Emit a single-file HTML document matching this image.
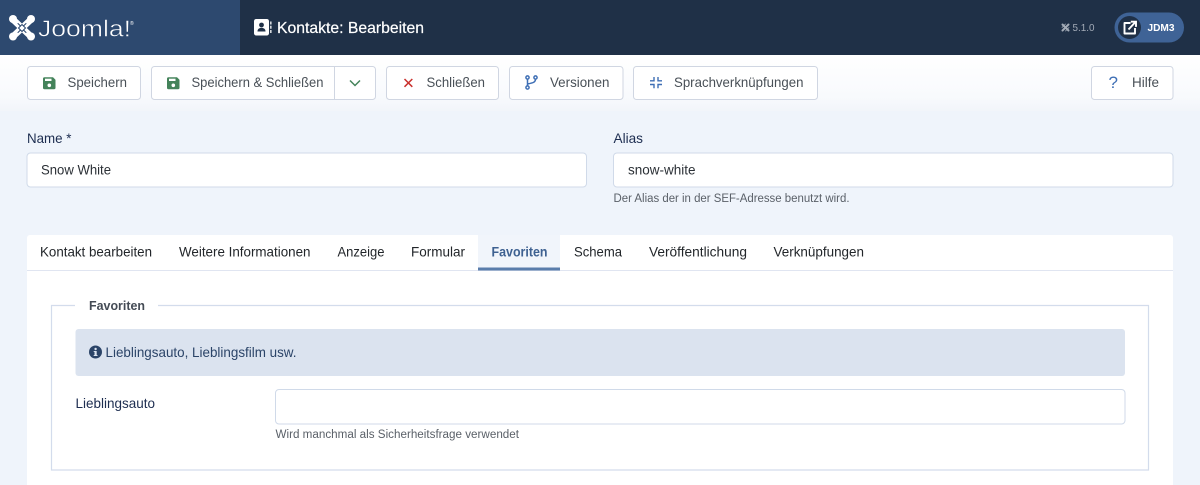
<!DOCTYPE html>
<html lang="de">
<head>
<meta charset="utf-8">
<title>Kontakte: Bearbeiten</title>
<style>
html,body{margin:0;padding:0;width:1200px;height:485px;overflow:hidden;background:#eff4fb}
svg{display:block}
text{font-family:"Liberation Sans",sans-serif;font-size:14px}
.btn{fill:#fff;stroke:#d0d6e2;stroke-width:1}
.bt{fill:#495057;font-size:14px}
.field{fill:#fff;stroke:#d0dae9;stroke-width:1}
.lab{fill:#1d2d50;font-size:14px}
.tab{fill:#22262a;font-size:14px}
.help{fill:#5a6068;font-size:11.5px}
</style>
</head>
<body>
<svg width="1200" height="485" viewBox="0 0 1200 485" xmlns="http://www.w3.org/2000/svg">
<defs>
<linearGradient id="tb" x1="0" y1="0" x2="0" y2="1">
<stop offset="0" stop-color="#ffffff"/><stop offset=".75" stop-color="#f8fafd"/><stop offset="1" stop-color="#f2f5fa"/>
</linearGradient>
</defs>
<rect width="1200" height="485" fill="#eff4fb"/>
<rect y="55" width="1200" height="56" fill="url(#tb)"/>
<rect width="1200" height="55" fill="#1f3047"/>
<rect width="240" height="55" fill="#2d496f"/>

<!-- logo -->
<g stroke-linecap="round" fill="none">
<path d="M13 19.500 31 36.500M31 19.500 13 36.500" stroke="#fff" stroke-width="6.500"/>
<path d="M18 23.500 20.500 26M26 23.500 23.500 26M18 32.500 20.500 30M26 32.500 23.500 30" stroke="#2d496f" stroke-width="1"/>
<path d="M22 24.500 18.500 28 22 31.500 25.500 28Z" stroke="#2d496f" stroke-width="1"/>
</g>
<g fill="#fff"><circle cx="13" cy="19" r="4"/><circle cx="31" cy="19" r="4"/><circle cx="13" cy="36.500" r="4"/><circle cx="31" cy="36.500" r="4"/></g>
<text x="38" y="36.500" textLength="93" lengthAdjust="spacingAndGlyphs" style="font-size:23px" fill="#fff" stroke="#2d496f" stroke-width=".5">Joomla!</text>
<text x="130" y="25" style="font-size:5px" fill="#fff">®</text>

<!-- title -->
<rect x="254" y="19" width="15" height="16.500" rx="2.200" fill="#fff"/>
<circle cx="261.500" cy="25" r="2.400" fill="#1f3047"/>
<path d="M257.500 31.500c0-2.600 1.600-3.600 4-3.600s4 1 4 3.600z" fill="#1f3047"/>
<path d="M270.200 21.500h1.300v3h-1.300zM270.200 25.800h1.300v3h-1.300zM270.200 30h1.300v3h-1.300z" fill="#fff"/>
<text x="277" y="33" textLength="147" lengthAdjust="spacingAndGlyphs" style="font-size:16px" fill="#fff" stroke="#fff" stroke-width=".2">Kontakte: Bearbeiten</text>

<!-- version -->
<g stroke="#a3abb7" fill="none" stroke-linecap="round">
<path d="M1062.500 24.500 1068.500 30.500M1068.500 24.500 1062.500 30.500" stroke-width="2"/>
<path d="M1062 27.500 1065.500 24M1069 27.500 1065.500 31" stroke-width=".8"/>
</g>
<text x="1072.500" y="31" textLength="22" lengthAdjust="spacingAndGlyphs" style="font-size:10.500px" fill="#a3abb7">5.1.0</text>

<!-- user pill -->
<rect x="1114.500" y="12.500" width="69.500" height="30" rx="15" fill="#3f6396"/>
<circle cx="1129.500" cy="27.500" r="11.500" fill="#1f3047"/>
<path d="M1130.500 23h-6v10.500h10.500v-5.500" fill="none" stroke="#fff" stroke-width="1.900" stroke-linejoin="round"/>
<path d="M1128.500 29.500 1135 22.500M1130.800 21.700h5.200v5.200" fill="none" stroke="#fff" stroke-width="1.900"/>
<text x="1147.500" y="31" textLength="27" lengthAdjust="spacingAndGlyphs" style="font-size:10.500px;font-weight:700" fill="#fff">JDM3</text>

<!-- toolbar -->
<rect class="btn" x="27.500" y="66.500" width="113" height="33" rx="3"/>
<rect class="btn" x="151.500" y="66.500" width="224" height="33" rx="3"/>
<path d="M334.500 67v32" stroke="#d0d6e2"/>
<rect class="btn" x="386.500" y="66.500" width="112" height="33" rx="3"/>
<rect class="btn" x="509.500" y="66.500" width="113.500" height="33" rx="3"/>
<rect class="btn" x="633.500" y="66.500" width="184" height="33" rx="3"/>
<rect class="btn" x="1091.500" y="66.500" width="81.500" height="33" rx="3"/>

<!-- save icons -->
<g id="sv">
<path d="M44.500 77.300h8.500l2.500 2.500v8a1.500 1.500 0 0 1-1.500 1.500h-9.500a1.500 1.500 0 0 1-1.500-1.500v-9a1.500 1.500 0 0 1 1.500-1.500z" fill="#44835a"/>
<rect x="45" y="78.700" width="6.500" height="2.300" fill="#fff"/>
<circle cx="49.300" cy="85.300" r="1.800" fill="#fff"/>
</g>
<use href="#sv" x="124"/>
<text class="bt" x="67.500" y="87" textLength="59.500" lengthAdjust="spacingAndGlyphs">Speichern</text>
<text class="bt" x="191.500" y="87" textLength="132" lengthAdjust="spacingAndGlyphs">Speichern &amp; Schließen</text>
<path d="M350 80.500 355 85.500 360 80.500" fill="none" stroke="#44835a" stroke-width="1.500"/>

<path d="M404.500 79 412.300 86.800M412.300 79 404.500 86.800" stroke="#c9302c" stroke-width="1.500"/>
<text class="bt" x="426.500" y="87" textLength="58.500" lengthAdjust="spacingAndGlyphs">Schließen</text>

<g fill="none" stroke="#3f6fb5" stroke-width="1.500">
<circle cx="527.500" cy="87.500" r="1.600"/><circle cx="527.500" cy="77.500" r="1.600"/><circle cx="535.500" cy="77.500" r="1.600"/>
<path d="M527.500 79v7M535.500 79c0 3.500-3 4-8 5"/>
</g>
<text class="bt" x="550" y="87" textLength="59.500" lengthAdjust="spacingAndGlyphs">Versionen</text>

<g fill="none" stroke="#3f6fb5" stroke-width="1.400">
<path d="M654 77v3.800h-4M658 77v3.800h4M654 88.300v-3.800h-4M658 88.300v-3.800h4"/>
</g>
<text class="bt" x="674" y="87" textLength="129.500" lengthAdjust="spacingAndGlyphs">Sprachverknüpfungen</text>

<text x="1108.500" y="88" style="font-size:17px" fill="#3f6fb5">?</text>
<text class="bt" x="1132" y="87" textLength="27" lengthAdjust="spacingAndGlyphs">Hilfe</text>

<!-- name / alias -->
<text class="lab" x="27" y="143" textLength="44.500" lengthAdjust="spacingAndGlyphs">Name *</text>
<rect class="field" x="27" y="153" width="559.500" height="34" rx="3.500"/>
<text class="bt" x="41" y="174.500" textLength="70" lengthAdjust="spacingAndGlyphs" style="fill:#2b3036">Snow White</text>
<text class="lab" x="613.500" y="143" textLength="29.500" lengthAdjust="spacingAndGlyphs">Alias</text>
<rect class="field" x="613.500" y="153" width="559.500" height="34" rx="3.500"/>
<text class="bt" x="628" y="174.500" textLength="67.500" lengthAdjust="spacingAndGlyphs" style="fill:#2b3036">snow-white</text>
<text class="help" x="613.500" y="202" textLength="236" lengthAdjust="spacingAndGlyphs">Der Alias der in der SEF-Adresse benutzt wird.</text>

<!-- card -->
<path d="M27 485V238a3 3 0 0 1 3-3H1170a3 3 0 0 1 3 3V485z" fill="#fff"/>
<path d="M27 270.500H1173" stroke="#e0e5f1" stroke-width="1"/>
<rect x="478" y="235" width="82" height="33" fill="#f1f5fb"/>
<rect x="478" y="267.500" width="82" height="3" fill="#5a7dab"/>
<text class="tab" x="40" y="256.500" textLength="112" lengthAdjust="spacingAndGlyphs">Kontakt bearbeiten</text>
<text class="tab" x="179" y="256.500" textLength="131.500" lengthAdjust="spacingAndGlyphs">Weitere Informationen</text>
<text class="tab" x="337.500" y="256.500" textLength="47" lengthAdjust="spacingAndGlyphs">Anzeige</text>
<text class="tab" x="411" y="256.500" textLength="54" lengthAdjust="spacingAndGlyphs">Formular</text>
<text x="491.500" y="256.500" textLength="56" lengthAdjust="spacingAndGlyphs" fill="#3e6191" style="font-weight:700;font-size:13.500px">Favoriten</text>
<text class="tab" x="574" y="256.500" textLength="48" lengthAdjust="spacingAndGlyphs">Schema</text>
<text class="tab" x="649" y="256.500" textLength="98" lengthAdjust="spacingAndGlyphs">Veröffentlichung</text>
<text class="tab" x="773.500" y="256.500" textLength="90.500" lengthAdjust="spacingAndGlyphs">Verknüpfungen</text>

<!-- fieldset -->
<path d="M75 305.500H51.500V470H1148.500V305.500H158" fill="none" stroke="#d3dcec" stroke-width="1.200"/>
<text x="89" y="310" textLength="56" lengthAdjust="spacingAndGlyphs" fill="#444b55" style="font-weight:700;font-size:13px">Favoriten</text>

<rect x="75.500" y="329" width="1049.500" height="47" rx="3" fill="#dbe3ef"/>
<circle cx="95.500" cy="352" r="6.500" fill="#2b4468"/>
<rect x="94.500" y="351" width="2.200" height="4.300" fill="#dbe3ef"/>
<rect x="93.700" y="355" width="3.800" height="1" fill="#dbe3ef"/>
<rect x="93.700" y="351" width="2" height="1" fill="#dbe3ef"/>
<circle cx="95.600" cy="349" r="1.200" fill="#dbe3ef"/>
<text x="105.500" y="357" textLength="191" lengthAdjust="spacingAndGlyphs" fill="#2b4468">Lieblingsauto, Lieblingsfilm usw.</text>

<text class="lab" x="75.500" y="408" textLength="79.500" lengthAdjust="spacingAndGlyphs">Lieblingsauto</text>
<rect class="field" x="275.500" y="389.500" width="849.500" height="34.500" rx="3.500"/>
<text class="help" x="275.500" y="438" textLength="243.500" lengthAdjust="spacingAndGlyphs">Wird manchmal als Sicherheitsfrage verwendet</text>
</svg>
</body>
</html>
